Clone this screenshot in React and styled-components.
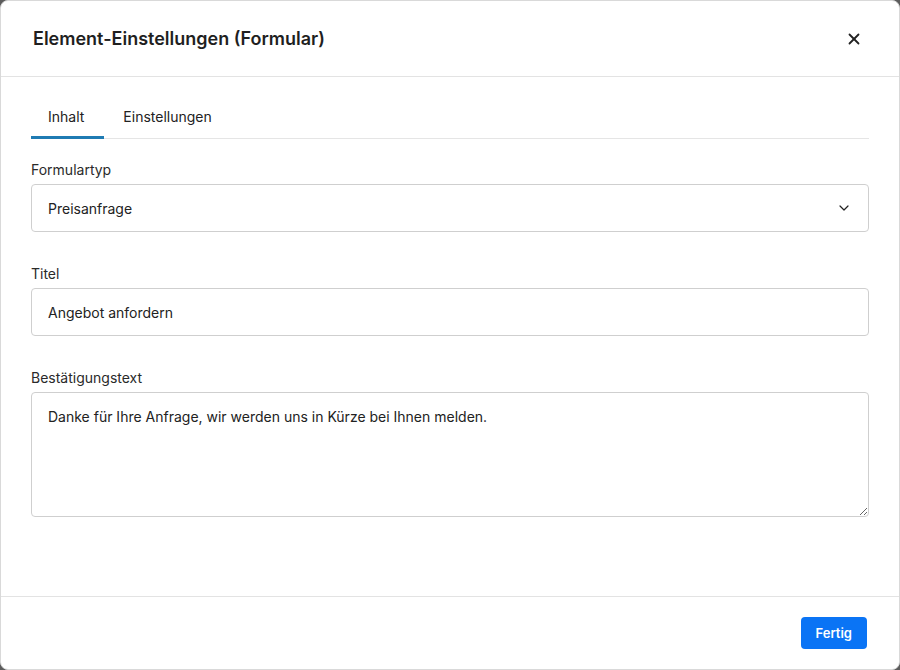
import React, { useState } from 'react';
import styled, { createGlobalStyle } from 'styled-components';
import { ChevronDown, X } from 'lucide-react';

const GlobalStyle = createGlobalStyle`
  html, body {
    margin: 0;
    padding: 0;
    background: #5c5c5c;
  }
  * {
    box-sizing: border-box;
  }
`;

const Modal = styled.div`
  width: 900px;
  height: 670px;
  display: flex;
  flex-direction: column;
  background: #fff;
  border: 1px solid #d9d9d9;
  border-radius: 8px;
  overflow: hidden;
  font-family: Inter, 'Noto Sans', sans-serif;
  color: #222;
`;

const Header = styled.div`
  height: 76px;
  flex-shrink: 0;
  display: flex;
  align-items: center;
  justify-content: space-between;
  padding: 0 30px 0 32px;
  border-bottom: 1px solid #e3e3e3;
`;

const Title = styled.h2`
  margin: 0;
  font-size: 18px;
  font-weight: 600;
  color: #1f1f1f;
`;

const CloseButton = styled.button`
  width: 30px;
  height: 30px;
  display: flex;
  align-items: center;
  justify-content: center;
  padding: 0;
  border: none;
  background: none;
  color: #222;
  cursor: pointer;
`;

const Body = styled.div`
  flex: 1;
  padding: 20px 30px 0 30px;
`;

const TabBar = styled.div`
  display: flex;
  gap: 2px;
  border-bottom: 1px solid #e5e5e5;
  margin-bottom: 21px;
`;

const Tab = styled.button`
  padding: 10px 20px 9px 17px;
  margin-bottom: -1px;
  border: none;
  border-bottom: 3px solid ${(p) => (p.$active ? '#1f7bb3' : 'transparent')};
  background: none;
  font-family: inherit;
  font-size: 14px;
  line-height: 20px;
  color: #222;
  cursor: pointer;
`;

const Field = styled.div`
  display: flex;
  flex-direction: column;
  gap: 4px;
  margin-bottom: 32px;
`;

const Label = styled.label`
  font-size: 14px;
  line-height: 20px;
  color: #2a2a2a;
`;

const SelectBox = styled.div`
  height: 48px;
  display: flex;
  align-items: center;
  justify-content: space-between;
  padding: 0 16px;
  border: 1px solid #cfcfcf;
  border-radius: 4px;
  font-size: 14px;
  color: #222;
`;

const TextInput = styled.input`
  height: 48px;
  padding: 0 16px;
  border: 1px solid #cfcfcf;
  border-radius: 4px;
  font-family: inherit;
  font-size: 14px;
  color: #222;
  outline: none;
`;

const TextArea = styled.textarea`
  height: 125px;
  padding: 14px 16px;
  border: 1px solid #cfcfcf;
  border-radius: 4px;
  font-family: inherit;
  font-size: 14px;
  line-height: 20px;
  color: #222;
  outline: none;
  resize: vertical;
`;

const Footer = styled.div`
  height: 73px;
  flex-shrink: 0;
  display: flex;
  align-items: center;
  justify-content: flex-end;
  padding: 0 32px;
  border-top: 1px solid #e3e3e3;
`;

const PrimaryButton = styled.button`
  height: 32px;
  padding: 0 15px;
  border: none;
  border-radius: 4px;
  background: #0a74f5;
  color: #fff;
  font-family: inherit;
  font-size: 13px;
  font-weight: 600;
  cursor: pointer;
`;

const App = () => {
  const [tab, setTab] = useState('inhalt');

  return (
    <>
      <GlobalStyle />
      <Modal>
        <Header>
          <Title>Element-Einstellungen (Formular)</Title>
          <CloseButton aria-label="Schließen">
            <X size={18} strokeWidth={2.4} />
          </CloseButton>
        </Header>
        <Body>
          <TabBar>
            <Tab $active={tab === 'inhalt'} onClick={() => setTab('inhalt')}>
              Inhalt
            </Tab>
            <Tab $active={tab === 'einstellungen'} onClick={() => setTab('einstellungen')}>
              Einstellungen
            </Tab>
          </TabBar>

          <Field>
            <Label>Formulartyp</Label>
            <SelectBox>
              Preisanfrage
              <ChevronDown size={16} strokeWidth={1.8} />
            </SelectBox>
          </Field>

          <Field>
            <Label htmlFor="titel">Titel</Label>
            <TextInput id="titel" defaultValue="Angebot anfordern" />
          </Field>

          <Field>
            <Label htmlFor="text">Bestätigungstext</Label>
            <TextArea
              id="text"
              defaultValue="Danke für Ihre Anfrage, wir werden uns in Kürze bei Ihnen melden."
            />
          </Field>
        </Body>
        <Footer>
          <PrimaryButton>Fertig</PrimaryButton>
        </Footer>
      </Modal>
    </>
  );
};

export default App;
